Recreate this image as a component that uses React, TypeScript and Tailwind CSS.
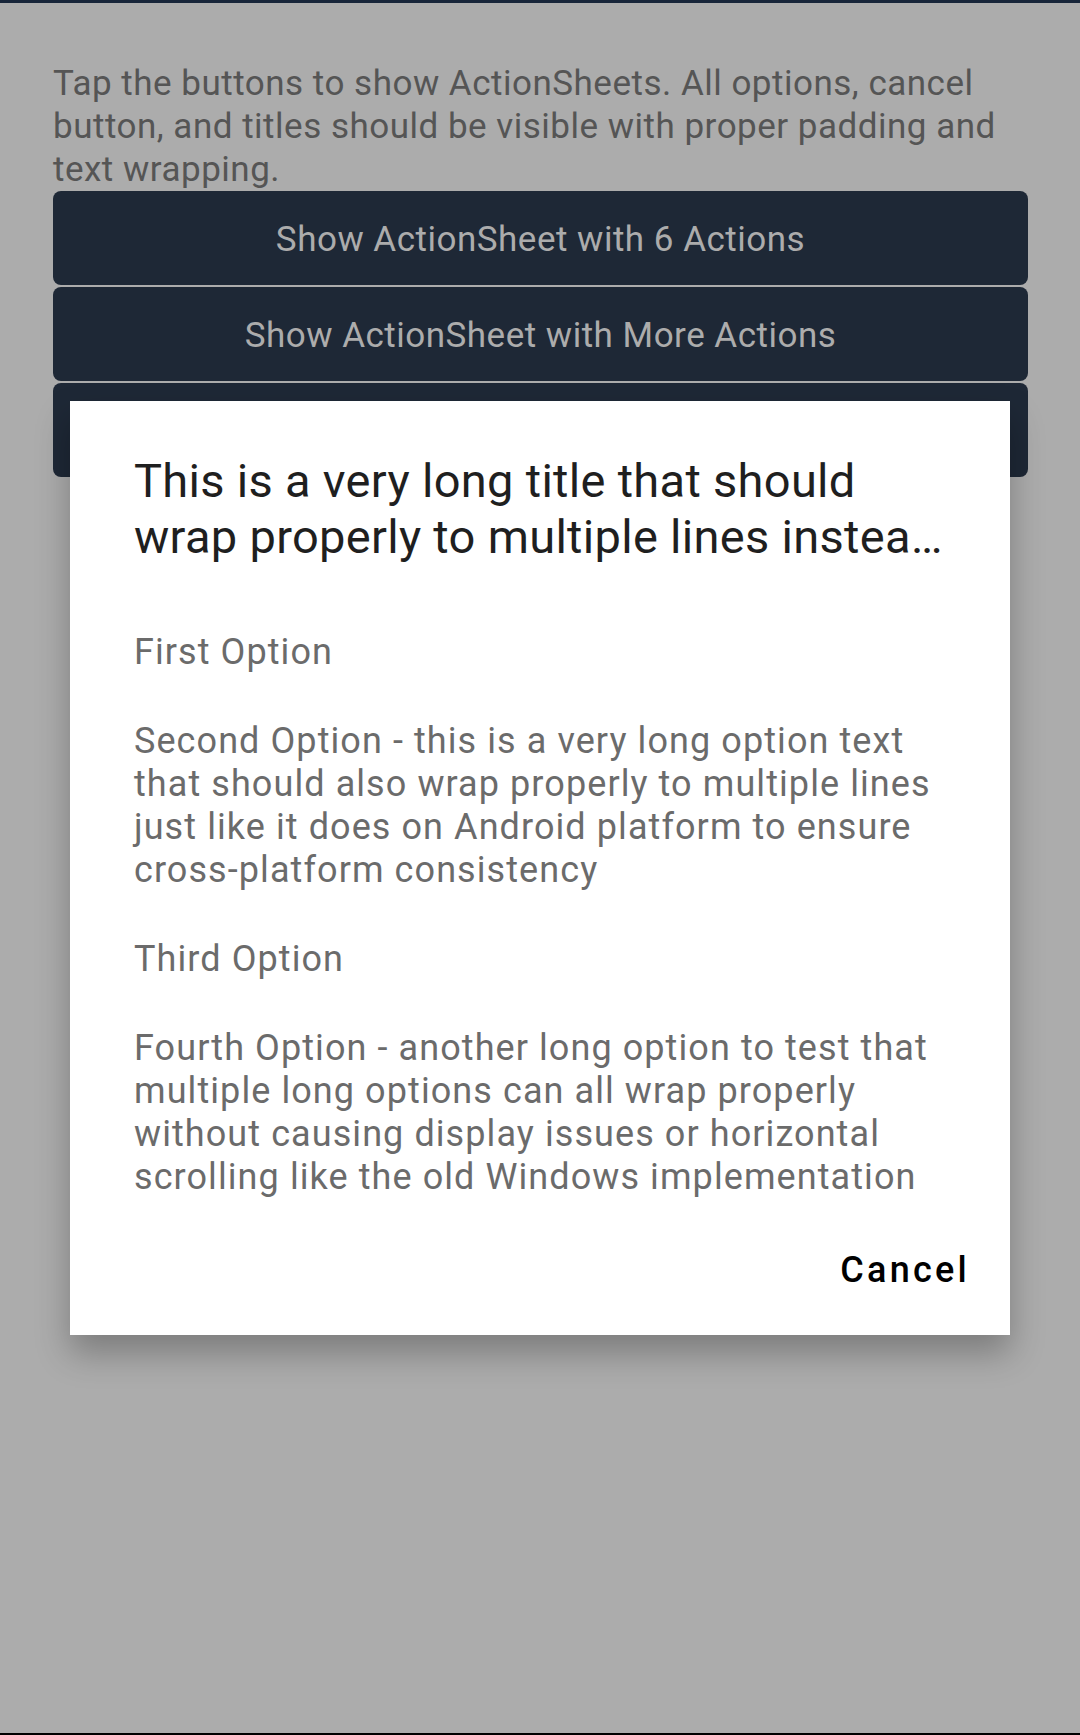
import React from 'react';

const OPTIONS = [
  'First Option',
  'Second Option - this is a very long option text that should also wrap properly to multiple lines just like it does on Android platform to ensure cross-platform consistency',
  'Third Option',
  'Fourth Option - another long option to test that multiple long options can all wrap properly without causing display issues or horizontal scrolling like the old Windows implementation',
];

const BUTTONS = ['Show ActionSheet with 6 Actions', 'Show ActionSheet with More Actions', 'Show ActionSheet with Long Title'];

export default function App() {
  return (
    <div className="relative flex h-[1735px] w-[1080px] flex-col overflow-hidden bg-[#acacac] font-['Roboto',sans-serif]">
      {/* status strip */}
      <div className="h-[3px] w-full bg-[#18263a]" />

      <div className="flex flex-1 flex-col pl-[53px] pr-[52px] pt-[59px]">
        <p className="text-[35px] leading-[43px] tracking-[0.5px] text-[#555555]">
          Tap the buttons to show ActionSheets. All options, cancel button, and titles should be visible with proper padding and text wrapping.
        </p>
        <div className="flex flex-col gap-[2px]">
          {BUTTONS.map((label) => (
            <button
              key={label}
              className="flex h-[94px] items-center justify-center rounded-[8px] bg-[#1e2836] pt-[4px] text-[35px] tracking-[0.5px] text-[#acacac]"
            >
              {label}
            </button>
          ))}
        </div>
      </div>

      <div className="h-[2px] w-full bg-black" />

      {/* ActionSheet dialog over the dimmed page */}
      <div className="absolute left-[70px] top-[401px] flex w-[940px] flex-col bg-white shadow-[0_18px_32px_rgba(0,0,0,0.28)]">
        <h2 className="mb-[43px] line-clamp-2 pl-[64px] pr-[62px] pt-[52px] text-[47px] leading-[56px] tracking-[0.3px] text-[#1f1f1f]">
          This is a very long title that should wrap properly to multiple lines instead of being truncated or cut off
        </h2>
        <div className="flex flex-col">
          {OPTIONS.map((opt) => (
            <div key={opt} className="py-[23px] pl-[64px] pr-[63px] text-[36px] leading-[43px] tracking-[0.03em] text-[#6b6b6b]">
              {opt}
            </div>
          ))}
        </div>
        <div className="flex justify-end pb-[43px] pr-[40px] pt-[26px]">
          <button className="text-[36px] font-medium leading-[44px] tracking-[0.09em] text-black">Cancel</button>
        </div>
      </div>
    </div>
  );
}
